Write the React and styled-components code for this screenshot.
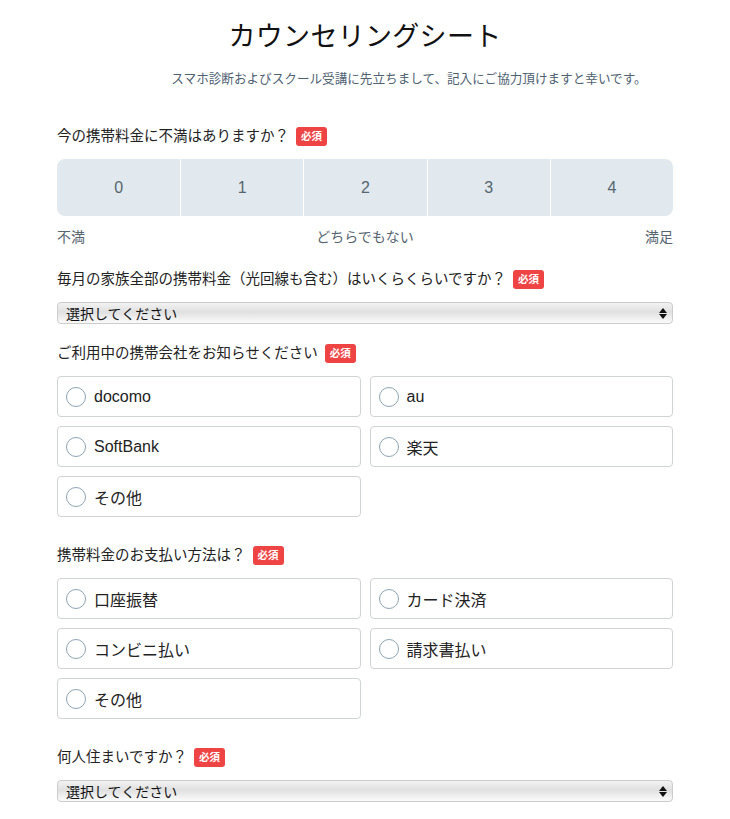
import styled, { createGlobalStyle } from "styled-components";

const GlobalStyle = createGlobalStyle`
  body {
    margin: 0;
    background: #fff;
    font-family: "Liberation Sans", "Noto Sans CJK JP", sans-serif;
    color: #222;
  }
`;

const Page = styled.div`
  width: 616px;
  margin: 0 auto;
  padding: 18px 0 20px;
  box-sizing: border-box;
`;

const Title = styled.h1`
  margin: 0;
  text-align: center;
  font-size: 27px;
  font-weight: 400;
  line-height: 38px;
  color: #111;
  letter-spacing: 0.3px;
`;

const Lead = styled.p`
  margin: 13px 0 0;
  padding-left: 88px;
  text-align: center;
  font-size: 12.6px;
  line-height: 20px;
  color: #4f6272;
`;

const Question = styled.section`
  margin-top: ${(p) => p.$gap || 30}px;
`;

const Label = styled.div`
  display: flex;
  align-items: center;
  gap: 7px;
  font-size: 14.5px;
  line-height: 20px;
  color: #222;
`;

const Badge = styled.span`
  display: inline-block;
  background: #ef4444;
  color: #fff;
  font-size: 10.5px;
  font-weight: 700;
  line-height: 19px;
  padding: 0 5px;
  border-radius: 3px;
`;

const Scale = styled.div`
  margin-top: 13px;
  display: grid;
  grid-template-columns: repeat(5, 1fr);
  background: #e1e9ee;
  border-radius: 8px;
  overflow: hidden;
  height: 57px;
`;

const ScaleCell = styled.div`
  display: flex;
  align-items: center;
  justify-content: center;
  font-size: 16px;
  color: #56656f;
  border-left: ${(p) => (p.$first ? "none" : "1px solid #fff")};
`;

const ScaleLegend = styled.div`
  margin-top: 11px;
  display: flex;
  justify-content: space-between;
  font-size: 14px;
  line-height: 20px;
  color: #56656f;
`;

const Select = styled.div`
  margin-top: 13px;
  height: 22px;
  border: 1px solid #cccccc;
  border-radius: 4px;
  background: linear-gradient(#f2f2f2, #e0e0e0 45%, #fbfbfb);
  display: flex;
  align-items: center;
  justify-content: space-between;
  padding: 0 5px 0 8px;
  font-size: 14px;
  color: #111;
  box-sizing: border-box;
`;

const Arrows = styled.span`
  display: flex;
  flex-direction: column;
  gap: 1px;
`;

const Options = styled.div`
  margin-top: 13px;
  display: grid;
  grid-template-columns: 1fr 1fr;
  gap: 9px;
`;

const Option = styled.label`
  display: flex;
  align-items: center;
  gap: 8px;
  height: 41px;
  box-sizing: border-box;
  border: 1px solid #cfd3d6;
  border-radius: 4px;
  padding: 0 8px;
  font-size: 16px;
  color: #222;
`;

const Radio = styled.span`
  width: 20px;
  height: 20px;
  border-radius: 50%;
  border: 1px solid #8ea3b1;
  box-sizing: border-box;
  flex: none;
`;

const Updown = () => (
  <Arrows>
    <svg width="8" height="5" viewBox="0 0 8 5">
      <path d="M0 5 L4 0 L8 5 Z" fill="#111" />
    </svg>
    <svg width="8" height="5" viewBox="0 0 8 5">
      <path d="M0 0 L4 5 L8 0 Z" fill="#111" />
    </svg>
  </Arrows>
);

const RadioGroup = ({ items }) => (
  <Options>
    {items.map((t) => (
      <Option key={t}>
        <Radio />
        {t}
      </Option>
    ))}
  </Options>
);

export default function App() {
  return (
    <>
      <GlobalStyle />
      <Page>
        <Title>カウンセリングシート</Title>
        <Lead>スマホ診断およびスクール受講に先立ちまして、記入にご協力頂けますと幸いです。</Lead>

        <Question $gap={37}>
          <Label>
            今の携帯料金に不満はありますか？<Badge>必須</Badge>
          </Label>
          <Scale>
            {[0, 1, 2, 3, 4].map((n) => (
              <ScaleCell key={n} $first={n === 0}>
                {n}
              </ScaleCell>
            ))}
          </Scale>
          <ScaleLegend>
            <span>不満</span>
            <span>どちらでもない</span>
            <span>満足</span>
          </ScaleLegend>
        </Question>

        <Question $gap={22}>
          <Label>
            毎月の家族全部の携帯料金（光回線も含む）はいくらくらいですか？<Badge>必須</Badge>
          </Label>
          <Select>
            選択してください
            <Updown />
          </Select>
        </Question>

        <Question $gap={19}>
          <Label>
            ご利用中の携帯会社をお知らせください<Badge>必須</Badge>
          </Label>
          <RadioGroup items={["docomo", "au", "SoftBank", "楽天", "その他"]} />
        </Question>

        <Question $gap={28}>
          <Label>
            携帯料金のお支払い方法は？<Badge>必須</Badge>
          </Label>
          <RadioGroup items={["口座振替", "カード決済", "コンビニ払い", "請求書払い", "その他"]} />
        </Question>

        <Question $gap={28}>
          <Label>
            何人住まいですか？<Badge>必須</Badge>
          </Label>
          <Select>
            選択してください
            <Updown />
          </Select>
        </Question>
      </Page>
    </>
  );
}
